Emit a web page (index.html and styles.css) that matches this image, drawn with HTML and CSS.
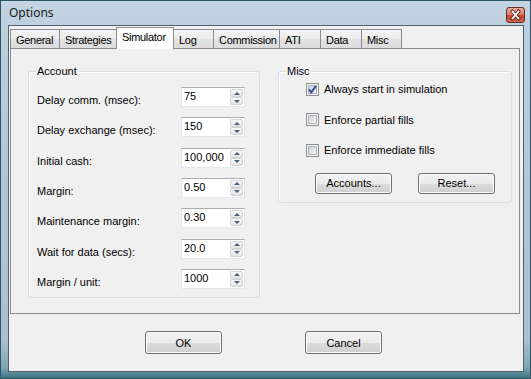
FILE: index.html
```html
<!DOCTYPE html>
<html>
<head>
<meta charset="utf-8">
<link rel="stylesheet" href="styles.css">
</head>
<body>
<div class="window">
  <div class="titlebar">
    <span class="title">Options</span>
    <div class="close">
      <svg width="17" height="14" viewBox="0 0 17 14"><path d="M5.5 3.5 L11.5 10.5 M11.5 3.5 L5.5 10.5" stroke="#5a1a10" stroke-width="3.4" stroke-linecap="square"/><path d="M5.5 3.5 L11.5 10.5 M11.5 3.5 L5.5 10.5" stroke="#fff" stroke-width="1.8" stroke-linecap="square"/></svg>
    </div>
  </div>
  <div class="client">
    <div class="tabs">
      <div class="tab t-general">General</div>
      <div class="tab t-strategies">Strategies</div>
      <div class="tab active t-simulator">Simulator</div>
      <div class="tab t-log">Log</div>
      <div class="tab t-commission">Commission</div>
      <div class="tab t-ati">ATI</div>
      <div class="tab t-data">Data</div>
      <div class="tab t-misc">Misc</div>
    </div>
    <div class="panel">
      <div class="group account">
        <span class="legend">Account</span>
        <div class="row"><span class="lbl">Delay comm. (msec):</span><div class="spin"><span class="val">75</span><div class="arrows"><div class="ab"><i class="up"></i></div><div class="ab"><i class="down"></i></div></div></div></div>
        <div class="row"><span class="lbl">Delay exchange (msec):</span><div class="spin"><span class="val">150</span><div class="arrows"><div class="ab"><i class="up"></i></div><div class="ab"><i class="down"></i></div></div></div></div>
        <div class="row"><span class="lbl">Initial cash:</span><div class="spin"><span class="val">100,000</span><div class="arrows"><div class="ab"><i class="up"></i></div><div class="ab"><i class="down"></i></div></div></div></div>
        <div class="row"><span class="lbl">Margin:</span><div class="spin"><span class="val">0.50</span><div class="arrows"><div class="ab"><i class="up"></i></div><div class="ab"><i class="down"></i></div></div></div></div>
        <div class="row"><span class="lbl">Maintenance margin:</span><div class="spin"><span class="val">0.30</span><div class="arrows"><div class="ab"><i class="up"></i></div><div class="ab"><i class="down"></i></div></div></div></div>
        <div class="row"><span class="lbl">Wait for data (secs):</span><div class="spin"><span class="val">20.0</span><div class="arrows"><div class="ab"><i class="up"></i></div><div class="ab"><i class="down"></i></div></div></div></div>
        <div class="row"><span class="lbl">Margin / unit:</span><div class="spin"><span class="val">1000</span><div class="arrows"><div class="ab"><i class="up"></i></div><div class="ab"><i class="down"></i></div></div></div></div>
      </div>
      <div class="group misc">
        <span class="legend">Misc</span>
        <div class="check-row">
          <svg class="cb" width="13" height="13" viewBox="0 0 13 13"><defs><linearGradient id="g1" x1="0" y1="0" x2="1" y2="1"><stop offset="0" stop-color="#cbcfd5"/><stop offset="1" stop-color="#f7f7f7"/></linearGradient></defs><rect x="0.5" y="0.5" width="12" height="12" fill="#f4f4f4" stroke="#8e8f8f"/><rect x="2.5" y="2.5" width="8" height="8" fill="url(#g1)" stroke="#aeb3b9"/><path d="M3 6.5 L5.3 9.3 L10 3" fill="none" stroke="#3c5397" stroke-width="2.1"/></svg>
          <span>Always start in simulation</span>
        </div>
        <div class="check-row">
          <svg class="cb" width="13" height="13" viewBox="0 0 13 13"><defs><linearGradient id="g2" x1="0" y1="0" x2="1" y2="1"><stop offset="0" stop-color="#cbcfd5"/><stop offset="1" stop-color="#f7f7f7"/></linearGradient></defs><rect x="0.5" y="0.5" width="12" height="12" fill="#f4f4f4" stroke="#8e8f8f"/><rect x="2.5" y="2.5" width="8" height="8" fill="url(#g2)" stroke="#aeb3b9"/></svg>
          <span>Enforce partial fills</span>
        </div>
        <div class="check-row">
          <svg class="cb" width="13" height="13" viewBox="0 0 13 13"><defs><linearGradient id="g3" x1="0" y1="0" x2="1" y2="1"><stop offset="0" stop-color="#cbcfd5"/><stop offset="1" stop-color="#f7f7f7"/></linearGradient></defs><rect x="0.5" y="0.5" width="12" height="12" fill="#f4f4f4" stroke="#8e8f8f"/><rect x="2.5" y="2.5" width="8" height="8" fill="url(#g3)" stroke="#aeb3b9"/></svg>
          <span>Enforce immediate fills</span>
        </div>
        <div class="misc-buttons">
          <div class="btn small">Accounts...</div>
          <div class="btn small">Reset...</div>
        </div>
      </div>
    </div>
    <div class="footer">
      <div class="btn big">OK</div>
      <div class="btn big">Cancel</div>
    </div>
  </div>
</div>
</body>
</html>
```
FILE: styles.css
```css
html, body {
  margin: 0;
  padding: 0;
  background: #7fa0b0;
}
body {
  font-family: "Liberation Sans", Arial, sans-serif;
  font-size: 11px;
  color: #000;
}
.window {
  width: 531px;
  height: 379px;
  box-sizing: border-box;
  border: 1px solid #2d5563;
  background: linear-gradient(#c3d5e2 0%, #bccfdc 8%, #b3c8d6 40%, #a9c0cf 90%, #7fa6b4 97%, #3d7684 100%);
  display: flex;
  flex-direction: column;
}
.titlebar {
  height: 24px;
  display: flex;
  align-items: center;
  justify-content: space-between;
  padding: 0 5px 0 8px;
}
.title {
  font-family: "Noto Sans", "Liberation Sans", sans-serif;
  font-size: 12px;
  color: #1a1a1a;
  margin-top: -2px;
}
.close {
  width: 17px;
  height: 14px;
  border: 1px solid #6a2c20;
  border-radius: 3px;
  background: linear-gradient(#e6a99b 0%, #d9826f 45%, #c4402a 55%, #cf6a50 100%);
  margin-top: 3px;
  display: flex;
}
.client {
  margin-left: 7px;
  width: 516px;
  height: 347px;
  box-sizing: border-box;
  border: 1px solid #52606c;
  background: #f0f0f0;
  display: flex;
  flex-direction: column;
}
.tabs {
  display: flex;
  align-items: flex-end;
  height: 21px;
  margin: 1px 0 0 1px;
}
.tab {
  box-sizing: border-box;
  height: 19px;
  padding: 0 0 0 5px;
  line-height: 20px;
  letter-spacing: -0.3px;
  border: 1px solid #898c95;
  border-bottom: none;
  margin-right: -1px;
  background: linear-gradient(#f3f3f3, #ebebeb 50%, #e2e2e2 51%, #dcdcdc);
  white-space: nowrap;
  overflow: hidden;
}
.t-general { width: 50px; }
.t-strategies { width: 58px; }
.t-simulator { width: 58px; }
.t-log { width: 41px; }
.t-commission { width: 67px; }
.t-ati { width: 42px; }
.t-data { width: 42px; }
.t-misc { width: 41px; }
.tab.active {
  height: 22px;
  line-height: 19px;
  margin-bottom: -1px;
  background: #fcfcfc;
  position: relative;
  z-index: 1;
  padding-left: 5px;
}
.panel {
  margin-left: 1px;
  width: 510px;
  height: 266px;
  box-sizing: border-box;
  border: 1px solid #898c95;
  background: #f0f0f0;
  padding: 22px 0 0 17px;
  display: flex;
  align-items: flex-start;
  gap: 18px;
}
.group {
  position: relative;
  box-sizing: border-box;
  border: 1px solid #d5dfe5;
  border-radius: 3px;
  box-shadow: inset 1px 1px 0 #fff;
}
.legend {
  position: absolute;
  top: -7px;
  left: 7px;
  padding: 0 1px;
  line-height: 13px;
  background: #f0f0f0;
}
.account {
  width: 232px;
  height: 227px;
  padding: 15px 0 0 8px;
}
.row {
  height: 30.33px;
  display: flex;
  align-items: flex-start;
}
.lbl {
  width: 144px;
  padding-top: 7px;
  line-height: 13px;
}
.spin {
  width: 64px;
  height: 20px;
  box-sizing: border-box;
  border: 1px solid;
  border-color: #abadb3 #e2e3ea #e3e9ef #e2e3ea;
  background: #fff;
  display: flex;
}
.val {
  flex: 1;
  padding-left: 2px;
  line-height: 17px;
}
.arrows {
  width: 13px;
  margin: 1px 1px 1px 0;
  display: flex;
  flex-direction: column;
}
.ab {
  flex: 1;
  box-sizing: border-box;
  border: 1px solid #d2d4d8;
  border-radius: 2px;
  background: linear-gradient(#f7f7f7, #e4e4e4);
  display: flex;
  align-items: center;
  justify-content: center;
}
.up, .down {
  width: 0;
  height: 0;
  border-left: 3px solid transparent;
  border-right: 3px solid transparent;
}
.up { border-bottom: 3px solid #4d6185; }
.down { border-top: 3px solid #4d6185; }
.misc {
  width: 234px;
  height: 132px;
  padding: 2px 0 0 27px;
}
.check-row {
  height: 30.5px;
  display: flex;
  align-items: center;
  gap: 5px;
}
.cb { display: block; flex: none; }
.misc-buttons {
  display: flex;
  gap: 26px;
  margin: 7px 0 0 9px;
}
.btn {
  box-sizing: border-box;
  border: 1px solid #707070;
  border-radius: 3px;
  background: linear-gradient(#f2f2f2 0%, #ebebeb 50%, #dddddd 51%, #cfcfcf 100%);
  box-shadow: inset 0 0 0 1px #fbfbfb;
  display: flex;
  align-items: center;
  justify-content: center;
}
.btn.small {
  width: 77px;
  height: 21px;
}
.footer {
  display: flex;
  gap: 83px;
  padding: 17px 0 0 136px;
}
.btn.big {
  width: 77px;
  height: 23px;
}
```
